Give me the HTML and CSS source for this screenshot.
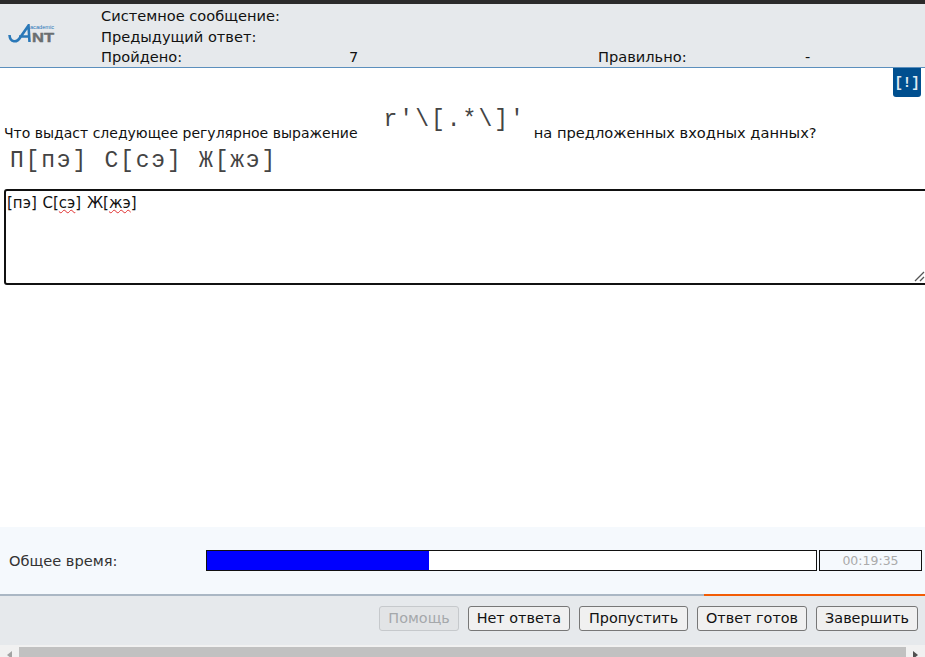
FILE: index.html
```html
<!DOCTYPE html>
<html lang="ru">
<head>
  <meta charset="UTF-8" />
  <title>Тест</title>
  <link rel="stylesheet" href="styles.css">
</head>
<body>

  <div class="topline"></div>

  <header class="header">
    <div class="logo">
      <svg width="48" height="20" viewBox="0 0 48 20">
        <path d="M1.5 11 C2 19 9 19 12.5 13 L20.5 1.5 L21.5 18 M11 12.5 L21 12.5" fill="none" stroke="#2a78b8" stroke-width="2.6"/>
        <text x="24" y="17.5" class="logo-nt" textLength="22" lengthAdjust="spacingAndGlyphs">NT</text>
        <text x="22" y="5" class="logo-small" textLength="24" lengthAdjust="spacingAndGlyphs">academic</text>
      </svg>
    </div>
    <div class="info">
      <div class="info-row">Системное сообщение:</div>
      <div class="info-row">Предыдущий ответ:</div>
      <div class="info-row stats">
        <span class="stat-label">Пройдено:</span>
        <span class="stat-value">7</span>
        <span class="stat-label2">Правильно:</span>
        <span class="stat-value2">-</span>
      </div>
    </div>
  </header>

  <main class="content">
    <div class="report-row">
      <button class="report">[!]</button>
    </div>
    <div class="question">
      <span>Что выдаст следующее регулярное выражение</span>
      <span class="code regex">r'\[.*\]'</span>
      <span class="question-end">на предложенных входных данных?</span>
    </div>
    <div class="code sample">
      <span>П[пэ]</span>
      <span>С[сэ]</span>
      <span>Ж[жэ]</span>
    </div>
    <div class="answer">
      [пэ] С[<span class="typo">сэ</span>] Ж[<span class="typo">жэ</span>]
      <svg class="grip" width="11" height="11" viewBox="0 0 11 11">
        <path d="M1 10 L10 1 M6 10 L10 6" stroke="#555" stroke-width="1.3" fill="none"/>
      </svg>
    </div>
  </main>

  <section class="timer">
    <span class="timer-label">Общее время:</span>
    <div class="progress"><div class="progress-fill" style="width: 36.4%"></div></div>
    <div class="clock">00:19:35</div>
  </section>

  <footer class="footer">
    <button class="btn" disabled>Помощь</button>
    <button class="btn">Нет ответа</button>
    <button class="btn btn-skip">Пропустить</button>
    <button class="btn">Ответ готов</button>
    <button class="btn">Завершить</button>
  </footer>

  <div class="scrollbar">
    <span class="arrow arrow-left"></span>
    <div class="thumb"></div>
    <span class="arrow arrow-right"></span>
  </div>

</body>
</html>
```

FILE: styles.css
```css
* {
  box-sizing: border-box;
}

html, body {
  height: 100%;
}

body {
  margin: 0;
  display: flex;
  flex-direction: column;
  overflow: hidden;
  font-family: 'DejaVu Sans', sans-serif;
  font-size: 14.6px;
  color: #111;
  background: white;
}

.topline {
  height: 4px;
  background: #2b2b2b;
  flex-shrink: 0;
}

.header {
  height: 64px;
  flex-shrink: 0;
  display: flex;
  background: #e6e9ec;
  border-bottom: 1px solid #5b8fbd;
}

.logo {
  width: 101px;
  padding: 20px 0 0 8px;
}

.logo-nt {
  font-family: 'Liberation Sans', sans-serif;
  font-size: 12.5px;
  font-weight: bold;
  fill: #6a6e70;
  stroke: #6a6e70;
  stroke-width: 0.4px;
}

.logo-small {
  font-family: 'Liberation Sans', sans-serif;
  font-size: 4.5px;
  fill: #2a78b8;
}

.info {
  flex: 1;
  padding-top: 2px;
}

.info-row {
  height: 20.5px;
  line-height: 20.5px;
}

.stats {
  display: flex;
}

.stat-label {
  width: 248px;
}

.stat-value {
  width: 249px;
}

.stat-label2 {
  width: 207px;
}

.content {
  flex: 1;
  min-height: 0;
}

.report-row {
  display: flex;
  justify-content: flex-end;
  padding-right: 4px;
}

.report {
  width: 28px;
  height: 29px;
  padding: 0;
  border: none;
  border-radius: 0 0 3px 3px;
  background: #004f8f;
  color: #dfe9f2;
  font-family: 'Liberation Mono', monospace;
  font-size: 14px;
  font-weight: bold;
}

.question {
  margin-top: 2px;
  padding-left: 4px;
  height: 42px;
  display: flex;
  align-items: flex-end;
  gap: 10px;
  font-size: 14px;
}

.question-end {
  font-size: 14.65px;
}

.code {
  font-family: 'Liberation Mono', monospace;
  color: #444;
  font-size: 23px;
  letter-spacing: 2px;
}

.regex {
  position: relative;
  top: -6px;
  margin-left: 16px;
  margin-right: -2px;
  line-height: 30px;
}

.sample {
  display: flex;
  gap: 16.5px;
  padding-left: 10px;
  margin-top: 5px;
  line-height: 30px;
  letter-spacing: 1.8px;
}

.answer {
  position: relative;
  width: 940px;
  height: 96px;
  margin: 13px 0 0 4px;
  padding: 3px 1px;
  border: 2px solid #111;
  border-radius: 3px;
  font-size: 15px;
  word-spacing: 1px;
  white-space: nowrap;
}

.typo {
  text-decoration: underline wavy #e03030 1px;
}

.grip {
  position: absolute;
  right: 17px;
  bottom: 1px;
}

.timer {
  height: 67px;
  flex-shrink: 0;
  display: flex;
  align-items: center;
  padding-left: 9px;
  background: #f5f9fd;
}

.timer-label {
  width: 197px;
  color: #333;
}

.progress {
  width: 611px;
  height: 21px;
  border: 1px solid #111;
  background: white;
}

.progress-fill {
  height: 100%;
  background: #0000ff;
}

.clock {
  width: 103px;
  height: 21px;
  margin-left: 2px;
  border: 1px solid #111;
  color: #aaa;
  font-size: 12.5px;
  line-height: 20px;
  text-align: center;
}

.footer {
  height: 51px;
  flex-shrink: 0;
  display: flex;
  justify-content: flex-end;
  align-items: center;
  gap: 9px;
  padding: 0 7px 5px 0;
  background: #e6e9ec;
  border-top: 2px solid;
  border-image: linear-gradient(to right, #aab7c4 703px, #f25c05 703px) 1;
}

.btn {
  height: 25px;
  padding: 0 8px;
  border: 1px solid #777;
  border-radius: 3px;
  background: #f0f0f0;
  color: #111;
  font-family: 'DejaVu Sans', sans-serif;
  font-size: 14.4px;
}

.btn-skip {
  width: 109px;
}

.btn:disabled {
  border-color: #c6c9cc;
  background: #e2e4e6;
  color: #a5a8ab;
}

.scrollbar {
  height: 12px;
  flex-shrink: 0;
  display: flex;
  background: #f1f1f1;
  overflow: hidden;
}

.thumb {
  flex: 1;
  margin-top: 2px;
  background: #c1c1c1;
}

.arrow {
  width: 19px;
  padding-top: 6px;
  display: flex;
  justify-content: center;
}

.arrow::before {
  content: "";
  height: 0;
  border-top: 4px solid transparent;
  border-bottom: 4px solid transparent;
}

.arrow-left::before {
  border-right: 5px solid #a3a3a3;
}

.arrow-right::before {
  border-left: 5px solid #505050;
}
```
